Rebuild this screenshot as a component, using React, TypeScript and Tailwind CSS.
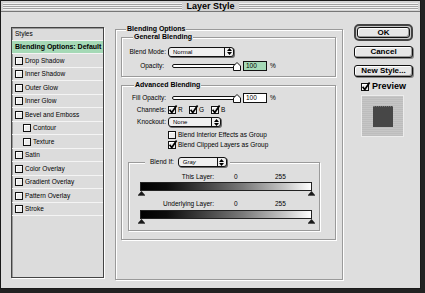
import React from "react";

const sans = "font-['Liberation_Sans',Arial,sans-serif]";

function Check({ checked = false }: { checked?: boolean }) {
    return (
        <div className="relative w-[8px] h-[8px] shrink-0 border border-[#111] bg-[#ececec] shadow-[inset_1px_1px_0_#fff]">
            {checked && (
                <svg className="absolute left-[-1px] top-[-2px] overflow-visible" width="10" height="10" viewBox="0 0 10 10">
                    <path d="M1.6 4.8 L3.8 7.6 L8.6 0.6" fill="none" stroke="#000" strokeWidth="1.7" />
                </svg>
            )}
        </div>
    );
}

function Popup({ label, width, italic = false }: { label: string; width: string; italic?: boolean }) {
    return (
        <div className={`${width} h-[10px] flex items-stretch rounded-[3px] border border-[#111] bg-[#f0f0f0] shadow-[1px_1px_0_#6a6a6a]`}>
            <div className={`flex-1 pl-[4px] leading-[8px] text-[6px] ${italic ? "italic" : ""}`}>{label}</div>
            <div className="w-[9px] border-l border-[#111] flex items-center justify-center">
                <svg width="5" height="7" viewBox="0 0 5 7">
                    <path d="M2.5 0 L5 3 L0 3 Z M0 4 L5 4 L2.5 7 Z" fill="#000" />
                </svg>
            </div>
        </div>
    );
}

function Slider() {
    return (
        <div className="relative w-[66px] h-[10px] flex items-center">
            <div className="w-full h-[4px] border border-[#111] bg-white rounded-[2px]" />
            <svg className="absolute right-[-3px] top-[1px]" width="8" height="9" viewBox="0 0 8 9">
                <path d="M0.5 8.5 L0.5 4 L4 0.5 L7.5 4 L7.5 8.5 Z" fill="#fff" stroke="#111" />
            </svg>
        </div>
    );
}

function Field({ green = false }: { green?: boolean }) {
    return (
        <div className={`w-[24px] h-[10px] border border-[#111] pl-[2px] leading-[8px] text-[6.5px] ${green ? "bg-[#a5d9b6]" : "bg-white"}`}>
            100
        </div>
    );
}

function Thumb() {
    return (
        <svg width="7" height="5" viewBox="0 0 7 5">
            <path d="M3.5 0 L7 4 L0 4 Z" fill="#1a1a1a" />
            <rect x="0" y="4" width="7" height="1" fill="#555" />
        </svg>
    );
}

function Bar() {
    return (
        <div className="ml-[11px] w-[172px] h-[9px] border border-[#222] bg-[linear-gradient(to_right,#000_0%,#0c0c0c_15%,#3c3c3c_35%,#7a7a7a_60%,#c8c8c8_85%,#fff_100%)]" />
    );
}

const styleRows: { label: string; h: string; sub?: boolean }[] = [
    { label: "Drop Shadow", h: "h-[14px]" },
    { label: "Inner Shadow", h: "h-[13px]" },
    { label: "Outer Glow", h: "h-[14px]" },
    { label: "Inner Glow", h: "h-[13px]" },
    { label: "Bevel and Emboss", h: "h-[14px]" },
    { label: "Contour", h: "h-[13px]", sub: true },
    { label: "Texture", h: "h-[14px]", sub: true },
    { label: "Satin", h: "h-[13px]" },
    { label: "Color Overlay", h: "h-[14px]" },
    { label: "Gradient Overlay", h: "h-[13px]" },
    { label: "Pattern Overlay", h: "h-[14px]" },
    { label: "Stroke", h: "h-[13px]" },
];

export default function App() {
    return (
        <div className={`w-[425px] h-[293px] bg-[#222] ${sans} text-black text-[6.5px]`}>
            <div className="w-[421px] h-[289px] border border-[#1a1a1a] bg-[#dedede] flex flex-col">
                {/* title bar */}
                <div className="h-[11px] shrink-0 border-b border-[#777] bg-[#d2d2d2] flex items-center px-[2px]">
                    <div className="flex-1 h-[7px] bg-[repeating-linear-gradient(to_bottom,#f2f2f2_0px,#f2f2f2_1px,#a2a2a2_1px,#a2a2a2_2px)]" />
                    <div className="px-[4px] text-[9px] font-bold leading-none">Layer Style</div>
                    <div className="flex-1 h-[7px] bg-[repeating-linear-gradient(to_bottom,#f2f2f2_0px,#f2f2f2_1px,#a2a2a2_1px,#a2a2a2_2px)]" />
                </div>

                <div className="flex pl-[10px]">
                    {/* styles list */}
                    <div className="mt-[15px] w-[93px] h-[251px] shrink-0 border border-[#444] bg-[#dcdcdc] shadow-[1px_1px_0_#fff,inset_1px_1px_0_#999] flex flex-col">
                        <div className="h-[13px] shrink-0 border-b border-[#f4f4f4] flex items-center pl-[3px]">Styles</div>
                        <div className="h-[13px] shrink-0 bg-[#a5d9b6] border-b border-[#f4f4f4] flex items-center pl-[3px] text-[7px] font-bold">
                            Blending Options: Default
                        </div>
                        {styleRows.map((r) => (
                            <div key={r.label} className={`${r.h} shrink-0 border-b border-[#f4f4f4] flex items-center ${r.sub ? "pl-[11px]" : "pl-[3px]"}`}>
                                <Check />
                                <span className="ml-[2px]">{r.label}</span>
                            </div>
                        ))}
                    </div>

                    {/* blending options */}
                    <div className="ml-[11px] mt-[17px] w-[228px] h-[251px] shrink-0 border border-[#9a9a9a] shadow-[1px_1px_0_#fff,inset_1px_1px_0_#fff] flex flex-col">
                        <div className="-mt-[5px] ml-[10px] px-[1px] w-fit h-[8px] bg-[#dedede] text-[7px] leading-[8px] font-bold">Blending Options</div>

                        {/* general */}
                        <div className="mt-[4px] ml-[5px] w-[215px] h-[40px] shrink-0 border border-[#9a9a9a] shadow-[1px_1px_0_#fff,inset_1px_1px_0_#fff] flex flex-col">
                            <div className="-mt-[5px] ml-[11px] px-[1px] w-fit h-[8px] bg-[#dedede] text-[7px] leading-[8px] font-bold">General Blending</div>
                            <div className="mt-[5px] h-[11px] flex items-center">
                                <div className="w-[44px] text-right">Blend Mode:</div>
                                <div className="ml-[2px]"><Popup label="Normal" width="w-[66px]" /></div>
                            </div>
                            <div className="mt-[3px] h-[11px] flex items-center">
                                <div className="w-[42px] text-right">Opacity:</div>
                                <div className="ml-[8px]"><Slider /></div>
                                <div className="ml-[5px]"><Field green /></div>
                                <div className="ml-[3px]">%</div>
                            </div>
                        </div>

                        {/* advanced */}
                        <div className="mt-[8px] ml-[5px] w-[215px] h-[155px] shrink-0 border border-[#9a9a9a] shadow-[1px_1px_0_#fff,inset_1px_1px_0_#fff] flex flex-col">
                            <div className="-mt-[5px] ml-[12px] px-[1px] w-fit h-[8px] bg-[#dedede] text-[7px] leading-[8px] font-bold">Advanced Blending</div>
                            <div className="mt-[4px] h-[10px] flex items-center">
                                <div className="w-[44px] text-right">Fill Opacity:</div>
                                <div className="ml-[6px]"><Slider /></div>
                                <div className="ml-[5px]"><Field /></div>
                                <div className="ml-[3px]">%</div>
                            </div>
                            <div className="mt-[2px] h-[10px] flex items-center">
                                <div className="w-[44px] text-right">Channels:</div>
                                <div className="ml-[2px] w-[21px] flex items-center"><Check checked /><span className="ml-[2px]">R</span></div>
                                <div className="w-[22px] flex items-center"><Check checked /><span className="ml-[2px]">G</span></div>
                                <div className="flex items-center"><Check checked /><span className="ml-[2px]">B</span></div>
                            </div>
                            <div className="mt-[2px] h-[10px] flex items-center">
                                <div className="w-[44px] text-right">Knockout:</div>
                                <div className="ml-[2px]"><Popup label="None" width="w-[53px]" /></div>
                            </div>
                            <div className="mt-[3px] h-[9px] pl-[46px] flex items-center">
                                <Check />
                                <span className="ml-[2px]">Blend Interior Effects as Group</span>
                            </div>
                            <div className="mt-[1px] h-[9px] pl-[46px] flex items-center">
                                <Check checked />
                                <span className="ml-[2px]">Blend Clipped Layers as Group</span>
                            </div>

                            {/* blend if */}
                            <div className="mt-[13px] ml-[6px] w-[192px] h-[69px] shrink-0 border border-[#9a9a9a] shadow-[1px_1px_0_#fff,inset_1px_1px_0_#fff] flex flex-col">
                                <div className="-mt-[6px] ml-[16px] pl-[5px] pr-[3px] w-fit h-[10px] bg-[#dedede] flex items-center">
                                    <span>Blend If:</span>
                                    <div className="ml-[4px]"><Popup label="Gray" width="w-[49px]" italic /></div>
                                </div>
                                <div className="mt-[6px] h-[8px] flex items-center">
                                    <div className="w-[85px] text-right">This Layer:</div>
                                    <div className="ml-[20px] w-[41px]">0</div>
                                    <div>255</div>
                                </div>
                                <div className="mt-[1px]"><Bar /></div>
                                <div className="ml-[9px] w-[177px] flex justify-between">
                                    <Thumb />
                                    <Thumb />
                                </div>
                                <div className="mt-[4px] h-[8px] flex items-center">
                                    <div className="w-[85px] text-right">Underlying Layer:</div>
                                    <div className="ml-[20px] w-[41px]">0</div>
                                    <div>255</div>
                                </div>
                                <div className="mt-[2px]"><Bar /></div>
                                <div className="ml-[9px] w-[177px] flex justify-between">
                                    <Thumb />
                                    <Thumb />
                                </div>
                            </div>
                        </div>
                    </div>

                    {/* buttons */}
                    <div className="ml-[11px] mt-[12px] w-[59px] flex flex-col text-[8px] font-bold">
                        <div className="h-[17px] rounded-[5px] border-[2px] border-[#444] bg-[#c8c8c8] p-[1px]">
                            <div className="h-full rounded-[3px] border border-[#111] bg-[#e6e6e6] shadow-[inset_-1px_-1px_0_#999,inset_1px_1px_0_#fff] flex items-center justify-center leading-none">OK</div>
                        </div>
                        <div className="mt-[5px] h-[12px] rounded-[3px] border border-[#111] bg-[#e6e6e6] shadow-[inset_-1px_-1px_0_#999,inset_1px_1px_0_#fff,1px_1px_0_#888] flex items-center justify-center leading-none">Cancel</div>
                        <div className="mt-[7px] h-[12px] rounded-[3px] border border-[#111] bg-[#e6e6e6] shadow-[inset_-1px_-1px_0_#999,inset_1px_1px_0_#fff,1px_1px_0_#888] flex items-center justify-center leading-none">New Style...</div>
                        <div className="mt-[5px] h-[9px] pl-[7px] flex items-center">
                            <Check checked />
                            <span className="ml-[3px] text-[9px] leading-none">Preview</span>
                        </div>
                        <div className="mt-[4px] ml-[7px] w-[43px] h-[42px] border border-[#ececec] bg-[repeating-linear-gradient(to_bottom,#c6c6c6_0px,#c6c6c6_1px,#bdbdbd_1px,#bdbdbd_2px)] pl-[11px] pt-[10px]">
                            <div className="w-[20px] h-[21px] bg-[#474747] border-t border-dotted border-[#777]" />
                        </div>
                    </div>
                </div>
            </div>
        </div>
    );
}
